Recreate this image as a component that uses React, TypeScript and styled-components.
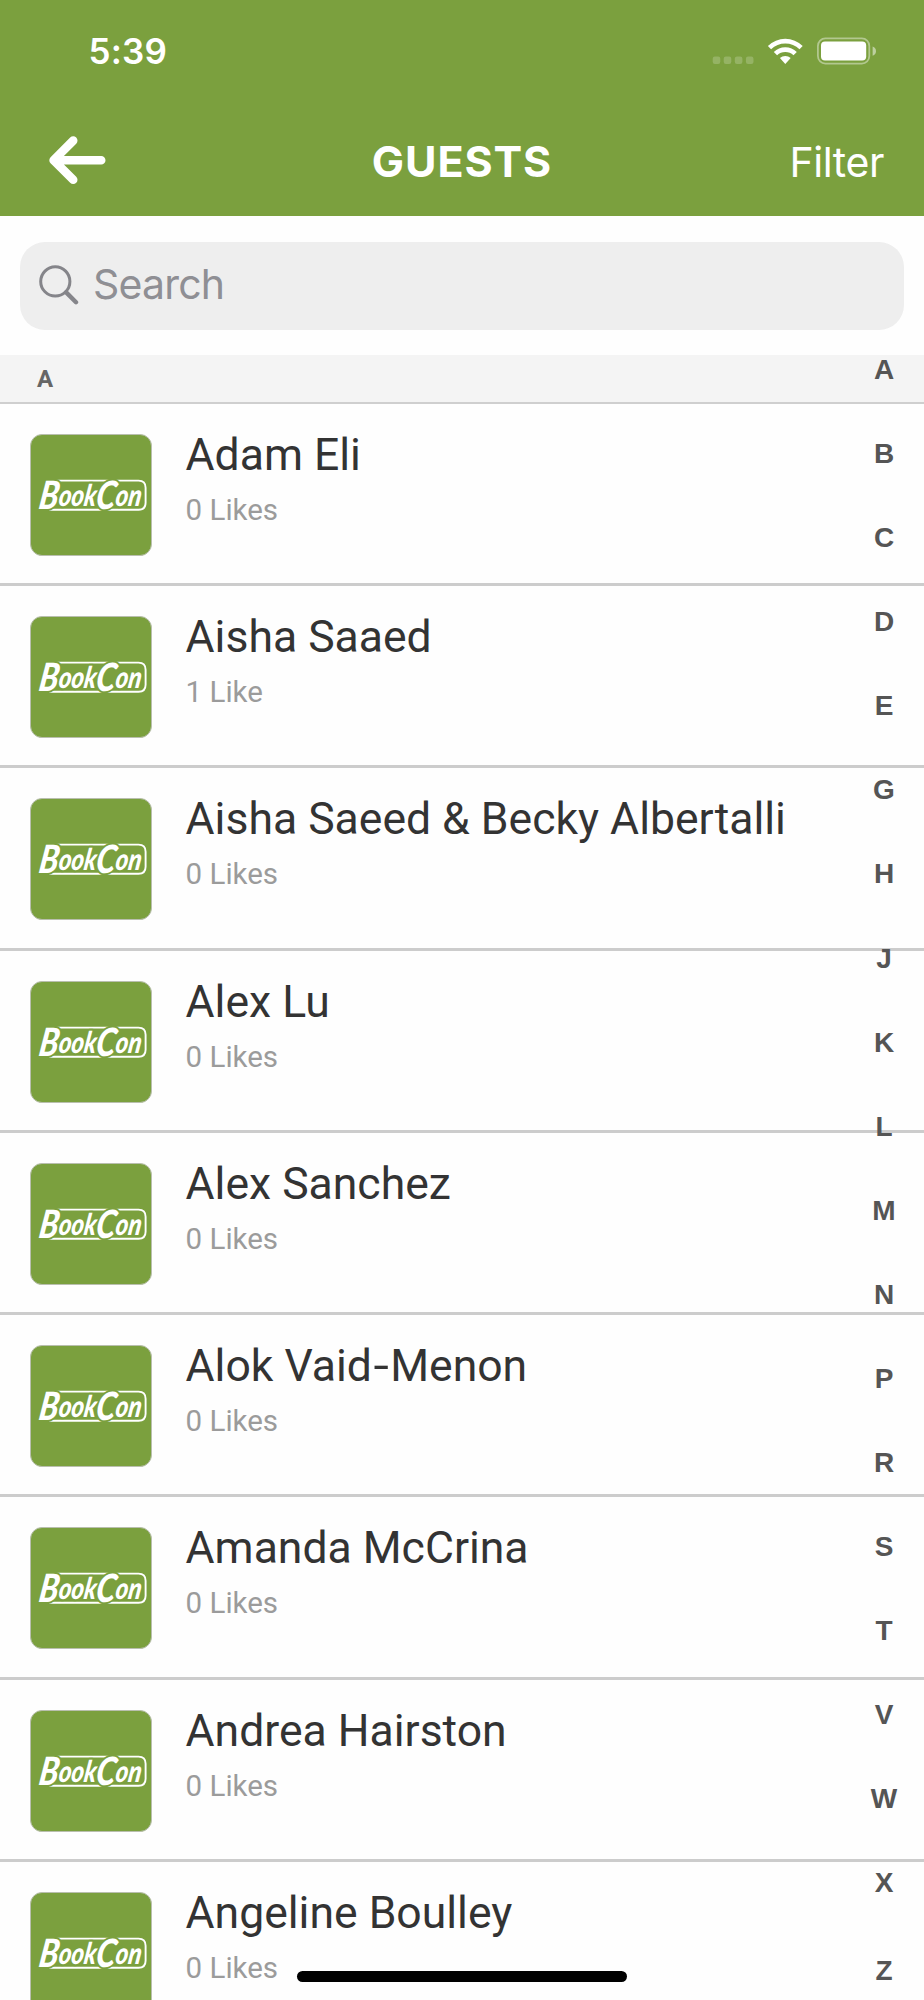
import React from "react";
import styled, { createGlobalStyle } from "styled-components";

const GREEN = "#7ba03e";

const GlobalStyle = createGlobalStyle`
  * { box-sizing: border-box; }
  body { margin: 0; background: #fefefe; }
`;

const Screen = styled.div`
  position: relative;
  width: 924px;
  height: 2000px;
  overflow: hidden;
  background: #fefefe;
  font-family: Roboto, sans-serif;
`;

const Header = styled.header`
  height: 216.4px;
  background: ${GREEN};
  color: #fff;
  font-family: Inter, sans-serif;
`;

const StatusBar = styled.div`
  display: flex;
  align-items: center;
  justify-content: space-between;
  height: 101px;
  padding: 0 48px 0 88.5px;
`;

const Clock = styled.span`
  font-size: 35px;
  font-weight: 600;
  line-height: 40px;
  letter-spacing: 0.2px;
`;

const NavBar = styled.div`
  display: grid;
  grid-template-columns: 200px 1fr 200px;
  align-items: center;
  height: 115px;
  padding: 4px 40px 0;
`;

const BackButton = styled.button`
  display: flex;
  width: 60px;
  margin-left: 7px;
  padding: 0;
  border: 0;
  background: none;
`;

const Title = styled.h1`
  margin: 0;
  text-align: center;
  font-size: 43px;
  font-weight: 750;
  line-height: 50px;
  letter-spacing: 0.9px;
`;

const FilterButton = styled.button`
  padding: 3px 0 0;
  border: 0;
  background: none;
  color: #fff;
  text-align: right;
  font-family: Inter, sans-serif;
  font-size: 41px;
  font-weight: 400;
  line-height: 50px;
  letter-spacing: -0.4px;
`;

const SearchArea = styled.div`
  height: 138.6px;
  padding: 25.4px 20px 0;
`;

const SearchField = styled.div`
  display: flex;
  align-items: center;
  gap: 14px;
  height: 88px;
  padding-left: 19px;
  border-radius: 25px;
  background: #eeeeee;
  color: #8f8f94;
  font-family: Inter, sans-serif;
  font-size: 41px;
  line-height: 50px;
  letter-spacing: -0.8px;
`;

const SearchLabel = styled.span`
  padding-bottom: 4px;
`;

const SectionHeader = styled.div`
  height: 49px;
  padding: 9px 0 0 37px;
  border-bottom: 2px solid #cfcfcf;
  background: #f4f4f4;
  color: #666;
  font-size: 24px;
  font-weight: 700;
  line-height: 30px;
`;

const Row = styled.article`
  display: flex;
  height: 182.24px;
  padding: 30px 0 0 30px;
  border-bottom: 3px solid #cccccc;
`;

const Thumb = styled.div`
  width: 122px;
  height: 122px;
  flex: none;
  border: 1px solid #b9bfae;
  border-radius: 12px;
  background: ${GREEN};
`;

const Details = styled.div`
  padding: 0 0 0 33.6px;
`;

const Name = styled.div`
  color: #333;
  font-size: 44.5px;
  line-height: 52px;
  margin-top: -5px;
  white-space: nowrap;
`;

const Likes = styled.div`
  margin-top: 11px;
  color: #9b9b9b;
  font-size: 29.5px;
  line-height: 36px;
`;

const Hyphen = styled.span`
  display: inline-block;
  margin: 0 3px;
  transform: scaleX(1.25);
`;

const IndexBar = styled.nav`
  position: absolute;
  top: 349.3px;
  right: 20px;
  width: 40px;
  display: flex;
  flex-direction: column;
  color: #555;
  font-family: "Liberation Sans", sans-serif;
  font-size: 28px;
  font-weight: 700;
  line-height: 42px;
  text-align: center;
`;

const IndexLetter = styled.span`
  height: 84.04px;
  &:last-child { padding-top: 4px; }
`;

const HomeIndicator = styled.div`
  position: absolute;
  left: 297px;
  top: 1971px;
  width: 330px;
  height: 11px;
  border-radius: 6px;
  background: #000;
`;

const StatusIcons = () => (
  <svg width="164" height="28" viewBox="0 0 164 28" fill="#fff">
    {[0.7, 11.7, 22.8, 33.9].map((x) => (
      <rect key={x} x={x} y="19.5" width="7.6" height="7.4" rx="2.2" opacity="0.2" />
    ))}
    <g transform="translate(55.5 0.5)">
      <path d="M0.4 8.4 a25 25 0 0 1 34.8 0 l-3.2 3.3 a20.6 20.6 0 0 0 -28.4 0 z" />
      <path d="M6.3 14.4 a16.4 16.4 0 0 1 23 0 l-3.3 3.4 a11.8 11.8 0 0 0 -16.4 0 z" />
      <path d="M12.4 20.6 a7.8 7.8 0 0 1 10.8 0 l-5.4 5.8 z" />
    </g>
    <rect x="105.9" y="1.4" width="51.4" height="25.2" rx="7.5" fill="none" stroke="#fff" strokeWidth="1.8" opacity="0.42" />
    <rect x="109" y="4.5" width="45.2" height="19" rx="4" />
    <path d="M160.6 9.6 q3.4 1.4 3.4 4.6 t-3.4 4.6 z" opacity="0.5" />
  </svg>
);

const BackArrow = () => (
  <svg width="60" height="52" viewBox="0 0 60 52" fill="none" stroke="#fff" strokeWidth="8.6" strokeLinecap="round" strokeLinejoin="round">
    <path d="M26.2 5.6 L6.6 25.2 L26.2 44.8 M7.6 25.2 H54.2" />
  </svg>
);

const SearchIcon = () => (
  <svg width="40" height="42" viewBox="0 0 40 42" fill="none" stroke="#85858a" strokeLinecap="round">
    <circle cx="16.3" cy="16.4" r="14.6" strokeWidth="3" />
    <path d="M27.2 27.4 L37 37.2" strokeWidth="4.4" />
  </svg>
);

const BookConLogo = () => (
  <svg width="120" height="120" viewBox="0 0 120 120">
    <path
      d="M23.5 45.6 H107.5 Q114.6 45.6 114.6 52.7 V67.7 Q114.6 74.8 107.5 74.8 H18"
      fill="none"
      stroke="#fff"
      strokeWidth="1.9"
    />
    <text
      transform="translate(7 72.5) skewX(-9)"
      fill="#fff"
      stroke={GREEN}
      strokeWidth="4"
      strokeLinejoin="round"
      paintOrder="stroke"
      fontFamily="Lato, sans-serif"
      fontStyle="italic"
      fontWeight="900"
      fontSize="30"
      textLength="102"
      lengthAdjust="spacingAndGlyphs"
    >
      <tspan fontSize="39" dy="1.5">B</tspan>
      <tspan dy="-3.5">ook</tspan>
      <tspan fontSize="39" dy="3.5">C</tspan>
      <tspan dy="-3.5">on</tspan>
    </text>
  </svg>
);

const guests = [
  { name: "Adam Eli", likes: "0 Likes" },
  { name: "Aisha Saaed", likes: "1 Like" },
  { name: "Aisha Saeed & Becky Albertalli", likes: "0 Likes" },
  { name: "Alex Lu", likes: "0 Likes" },
  { name: "Alex Sanchez", likes: "0 Likes" },
  { name: "Alok Vaid-Menon", likes: "0 Likes" },
  { name: "Amanda McCrina", likes: "0 Likes" },
  { name: "Andrea Hairston", likes: "0 Likes" },
  { name: "Angeline Boulley", likes: "0 Likes" },
];

const letters = "ABCDEGHJKLMNPRSTVWXZ".split("");

const GuestName = ({ name }: { name: string }) => {
  const [first, second] = name.split("-");
  return (
    <Name>
      {first}
      {second && <Hyphen>-</Hyphen>}
      {second}
    </Name>
  );
};

export default function App() {
  return (
    <Screen>
      <GlobalStyle />
      <Header>
        <StatusBar>
          <Clock>5:39</Clock>
          <StatusIcons />
        </StatusBar>
        <NavBar>
          <BackButton aria-label="Back">
            <BackArrow />
          </BackButton>
          <Title>GUESTS</Title>
          <FilterButton>Filter</FilterButton>
        </NavBar>
      </Header>
      <SearchArea>
        <SearchField>
          <SearchIcon />
          <SearchLabel>Search</SearchLabel>
        </SearchField>
      </SearchArea>
      <SectionHeader>A</SectionHeader>
      <main>
        {guests.map((guest) => (
          <Row key={guest.name}>
            <Thumb>
              <BookConLogo />
            </Thumb>
            <Details>
              <GuestName name={guest.name} />
              <Likes>{guest.likes}</Likes>
            </Details>
          </Row>
        ))}
      </main>
      <IndexBar>
        {letters.map((letter) => (
          <IndexLetter key={letter}>{letter}</IndexLetter>
        ))}
      </IndexBar>
      <HomeIndicator />
    </Screen>
  );
}
